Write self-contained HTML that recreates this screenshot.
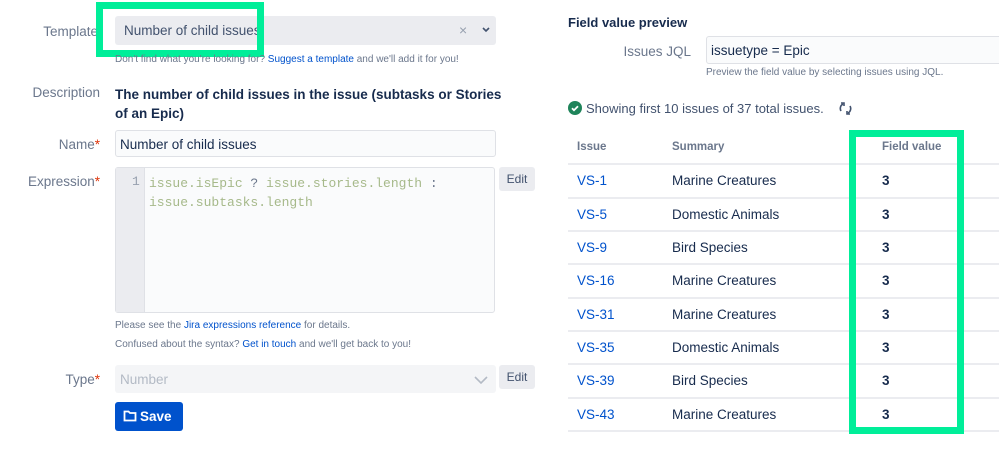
<!DOCTYPE html><html><head><style>
body{margin:0;width:999px;height:441px;background:#fff;font-family:"Liberation Sans",sans-serif;position:relative;overflow:hidden;color:#172b4d}
.a{position:absolute;white-space:nowrap}
.lbl{font-size:13.5px;color:#6b778c;text-align:right;width:100px}
.st{color:#de350b}
.small{font-size:10px;color:#6b778c}
a{color:#0052cc;text-decoration:none}
.mono{font-family:"Liberation Mono",monospace;font-size:13px;color:#a6b98a}
.edit{background:#ebecf0;border-radius:3px;font-size:12px;color:#42526e;width:36px;height:24px;line-height:24px;text-align:center}
.row{position:absolute;left:568px;width:431px;height:33px;border-top:2px solid #ebecf0;font-size:13.5px}
.row span{position:absolute;top:8px}
</style></head><body>
<div class="a lbl" style="left:0;top:24px;width:98px">Template</div>
<div class="a" style="left:115px;top:16px;width:381px;height:29px;background:#ebecf0;border-radius:3px"></div>
<div class="a" style="left:124px;top:23px;font-size:13.5px;color:#42526e">Number of child issues</div>
<div class="a" style="left:459px;top:22px;font-size:14px;color:#97a0af">×</div>
<svg class="a" style="left:482px;top:27px" width="8" height="6"><path d="M1 1l3 3 3-3" fill="none" stroke="#42526e" stroke-width="1.6"/></svg>
<div class="a" style="left:96px;top:2px;width:154px;height:41px;border:7px solid #00ee99"></div>
<div class="a small" style="left:115px;top:54px">Don't find what you're looking for? <a>Suggest a template</a> and we'll add it for you!</div>
<div class="a lbl" style="left:0;top:85px">Description</div>
<div class="a" style="left:115px;top:85px;font-size:13.5px;font-weight:bold;line-height:19px">The number of child issues in the issue (subtasks or Stories<br>of an Epic)</div>
<div class="a lbl" style="left:0;top:137px">Name<span class="st">*</span></div>
<div class="a" style="left:115px;top:130px;width:379px;height:25px;border:1px solid #dfe1e6;border-radius:3px;background:#fafbfc"></div>
<div class="a" style="left:120px;top:137px;font-size:13.5px">Number of child issues</div>
<div class="a lbl" style="left:0;top:174px">Expression<span class="st">*</span></div>
<div class="a" style="left:115px;top:167px;width:378px;height:144px;border:1px solid #dfe1e6;border-radius:3px;background:#fafbfc"></div>
<div class="a" style="left:116px;top:168px;width:28px;height:144px;background:#ebecf0;border-right:1px solid #dfe1e6"></div>
<div class="a mono" style="left:132px;top:174px;color:#97a0af">1</div>
<div class="a mono" style="left:149px;top:174px;line-height:19px">issue.isEpic <span style="color:#6b778c">?</span> issue.stories.length <span style="color:#6b778c">:</span><br>issue.subtasks.length</div>
<div class="a edit" style="left:499px;top:167px">Edit</div>
<div class="a small" style="left:115px;top:320px">Please see the <a>Jira expressions reference</a> for details.</div>
<div class="a small" style="left:115px;top:339px">Confused about the syntax? <a>Get in touch</a> and we'll get back to you!</div>
<div class="a lbl" style="left:0;top:372px">Type<span class="st">*</span></div>
<div class="a" style="left:115px;top:365px;width:381px;height:28px;background:#f4f5f7;border-radius:3px"></div>
<div class="a" style="left:120px;top:372px;font-size:13.5px;color:#b3bac5">Number</div>
<svg class="a" style="left:474px;top:376px" width="14" height="8"><path d="M1 1l6 6 6-6" fill="none" stroke="#b3bac5" stroke-width="1.6"/></svg>
<div class="a edit" style="left:499px;top:365px">Edit</div>
<div class="a" style="left:115px;top:402px;width:68px;height:29px;background:#0052cc;border-radius:3px"></div>
<svg class="a" style="left:123px;top:409px" width="14" height="13" viewBox="0 0 14 13"><path d="M1.5 2.5h4l1.5 1.5h5.5v7.5h-11z" fill="none" stroke="#fff" stroke-width="1.8"/></svg>
<div class="a" style="left:140px;top:409px;font-size:13.5px;font-weight:bold;color:#fff">Save</div>

<div class="a" style="left:568px;top:15px;font-size:13px;font-weight:bold">Field value preview</div>
<div class="a lbl" style="left:591px;top:44px">Issues JQL</div>
<div class="a" style="left:706px;top:36px;width:300px;height:26px;border:1px solid #dfe1e6;border-radius:3px;background:#fafbfc"></div>
<div class="a" style="left:711px;top:43px;font-size:13.5px">issuetype = Epic</div>
<div class="a small" style="left:706px;top:67px">Preview the field value by selecting issues using JQL.</div>
<svg class="a" style="left:568px;top:101px" width="14" height="14"><circle cx="7" cy="7" r="7" fill="#1f845a"/><path d="M4 7.2l2 2 4-4" fill="none" stroke="#fff" stroke-width="1.8"/></svg>
<div class="a" style="left:586px;top:101px;font-size:13px;color:#42526e">Showing first 10 issues of 37 total issues.</div>
<svg class="a" style="left:838px;top:101px" width="15" height="15" viewBox="0 0 15 15"><path d="M3 10A5 5 0 0 1 5 3M12 5a5 5 0 0 1-2 7" fill="none" stroke="#42526e" stroke-width="1.6"/><path d="M3 2h3v3M12 13H9v-3" fill="none" stroke="#42526e" stroke-width="1.6"/></svg>
<div class="a" style="left:577px;top:141px;font-size:11.5px;color:#6b778c;font-weight:bold">Issue</div>
<div class="a" style="left:672px;top:141px;font-size:11.5px;color:#6b778c;font-weight:bold">Summary</div>
<div class="a" style="left:882px;top:141px;font-size:11.5px;color:#6b778c;font-weight:bold">Field value</div>
<div class="row" style="top:163px"><span style="left:9px;color:#0052cc">VS-1</span><span style="left:104px">Marine Creatures</span><span style="left:314px;font-weight:bold">3</span></div>
<div class="row" style="top:197px"><span style="left:9px;color:#0052cc">VS-5</span><span style="left:104px">Domestic Animals</span><span style="left:314px;font-weight:bold">3</span></div>
<div class="row" style="top:230px"><span style="left:9px;color:#0052cc">VS-9</span><span style="left:104px">Bird Species</span><span style="left:314px;font-weight:bold">3</span></div>
<div class="row" style="top:263px"><span style="left:9px;color:#0052cc">VS-16</span><span style="left:104px">Marine Creatures</span><span style="left:314px;font-weight:bold">3</span></div>
<div class="row" style="top:297px"><span style="left:9px;color:#0052cc">VS-31</span><span style="left:104px">Marine Creatures</span><span style="left:314px;font-weight:bold">3</span></div>
<div class="row" style="top:330px"><span style="left:9px;color:#0052cc">VS-35</span><span style="left:104px">Domestic Animals</span><span style="left:314px;font-weight:bold">3</span></div>
<div class="row" style="top:363px"><span style="left:9px;color:#0052cc">VS-39</span><span style="left:104px">Bird Species</span><span style="left:314px;font-weight:bold">3</span></div>
<div class="row" style="top:397px"><span style="left:9px;color:#0052cc">VS-43</span><span style="left:104px">Marine Creatures</span><span style="left:314px;font-weight:bold">3</span></div>
<div class="row" style="top:430px"></div>
<div class="a" style="left:849px;top:130px;width:101px;height:290px;border:7px solid #00ee99"></div>
</body></html>
